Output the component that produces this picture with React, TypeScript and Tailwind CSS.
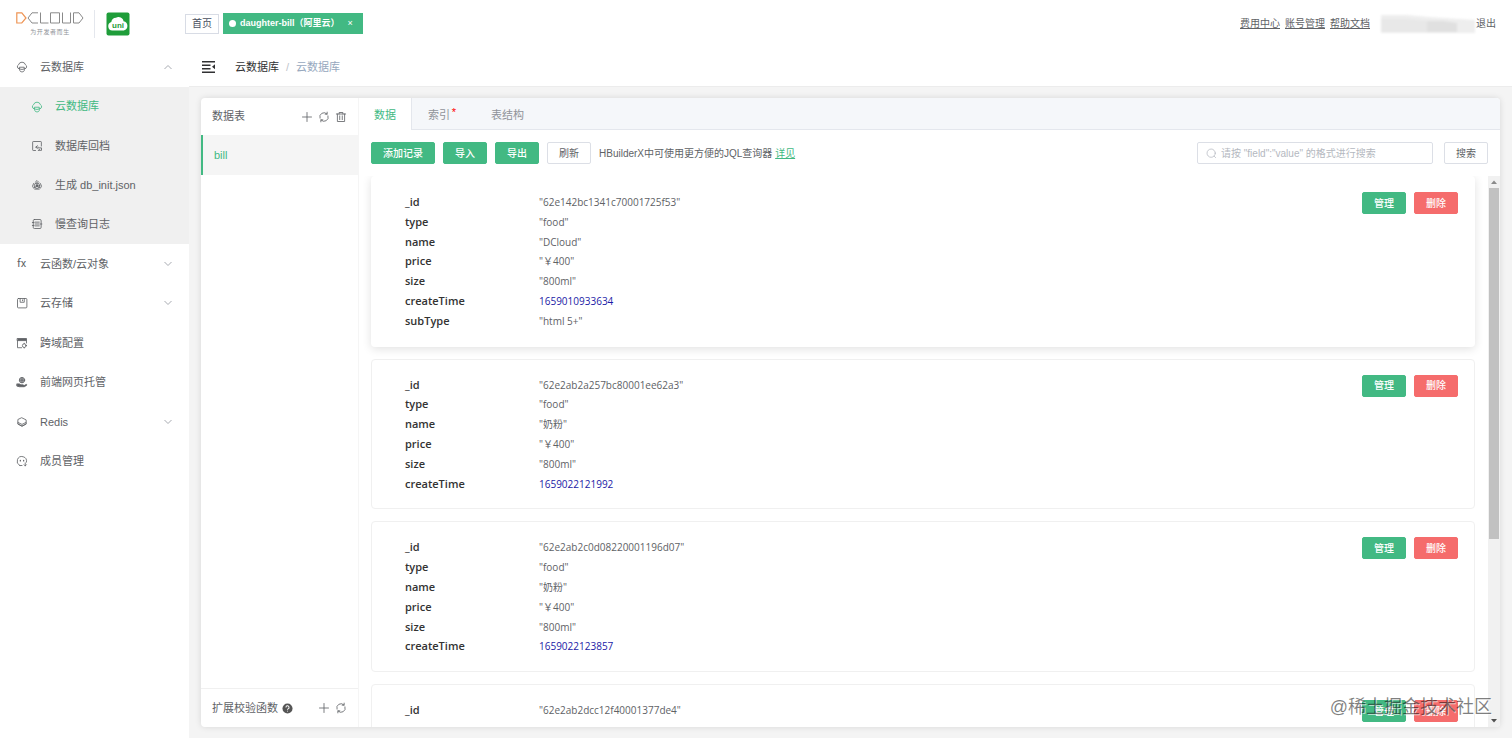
import { ReactNode } from 'react'

interface RecordItem {
  id: string
  fields: [string, string | number][]
}

interface MenuItem {
  label: string
  icon: ReactNode
  expandable?: boolean
}

const records: RecordItem[] = [
  {
    id: '62e142bc1341c70001725f53',
    fields: [
      ['type', 'food'],
      ['name', 'DCloud'],
      ['price', '￥400'],
      ['size', '800ml'],
      ['createTime', 1659010933634],
      ['subType', 'html 5+'],
    ],
  },
  {
    id: '62e2ab2a257bc80001ee62a3',
    fields: [
      ['type', 'food'],
      ['name', '奶粉'],
      ['price', '￥400'],
      ['size', '800ml'],
      ['createTime', 1659022121992],
    ],
  },
  {
    id: '62e2ab2c0d08220001196d07',
    fields: [
      ['type', 'food'],
      ['name', '奶粉'],
      ['price', '￥400'],
      ['size', '800ml'],
      ['createTime', 1659022123857],
    ],
  },
  {
    id: '62e2ab2dcc12f40001377de4',
    fields: [],
  },
]

function Icon({ children, className = 'size-3' }: { children: ReactNode; className?: string }) {
  return (
    <svg
      viewBox="0 0 16 16"
      fill="none"
      stroke="currentColor"
      strokeWidth="1.1"
      strokeLinecap="round"
      strokeLinejoin="round"
      className={`shrink-0 ${className}`}
      aria-hidden="true"
    >
      {children}
    </svg>
  )
}

const CloudDbIcon = () => (
  <Icon>
    <path d="M4 10.500a3 3 0 0 1-.6-5.500A4.800 4.800 0 0 1 12.600 5a3 3 0 0 1-.6 5.500" />
    <path d="M5 8.300h6v4.400c0 1-1.300 1.800-3 1.800s-3-.8-3-1.800zM5 10.400c1.500 1.200 4.500 1.200 6 0" />
  </Icon>
)

const RollbackIcon = () => (
  <Icon>
    <path d="M6 14H3a.8.8 0 0 1-.8-.8V2.800A.8.8 0 0 1 3 2h10a.8.8 0 0 1 .8.8V8" />
    <path d="M8.500 7.500 6.500 9.500l2 2M6.500 9.500h3M10 10.500h4v3.300h-4M11.500 12.300 10 13.800" />
  </Icon>
)

const GenerateIcon = () => (
  <Icon>
    <path d="M5.500 4.500 8 2l2.500 2.500M3.500 6 2 9.500l1.500 2.800M12.500 6 14 9.500l-1.500 2.800M5 13.500h6" />
    <circle cx="8" cy="9" r="3.600" />
    <circle cx="8" cy="9" r="1.300" fill="currentColor" />
    <path d="M8 4.500v3M4.500 11.500l2.500-1.600M11.500 11.500 9 9.900" />
  </Icon>
)

const SlowLogIcon = () => (
  <Icon>
    <rect x="3" y="2" width="10.500" height="12" rx="1.500" />
    <path d="M5.500 5.500H11M5.500 8H11M5.500 10.500H11M1.800 6H4M1.800 10H4M12.500 8h2" />
  </Icon>
)

const StorageIcon = () => (
  <Icon>
    <rect x="2" y="2" width="12.500" height="12.500" rx="1.200" />
    <path d="M5.500 2v5h5.500V2M8.700 3.800v1.200" />
  </Icon>
)

const CrossIcon = () => (
  <Icon>
    <path d="M2 2h12v2.800H2z" fill="currentColor" />
    <path d="M2 5v9.300h5.500M14 5v3" />
    <circle cx="11" cy="11.500" r="2.500" />
    <path d="M11 8.300V9M14 11.500h-.5M11 14.700V14" />
  </Icon>
)

const HostingIcon = () => (
  <Icon>
    <circle cx="8" cy="5.500" r="3.600" fill="currentColor" fillOpacity="0.5" />
    <path d="M5 5.500h6M8 2v7" />
    <path
      d="M1.500 10.500h3l2 1.300h3c1 0 1 1.200 0 1.200h1l3-1.800c1 0 1.200.8.5 1.300L11 14.300H4.500l-3-.8z"
      fill="currentColor"
    />
  </Icon>
)

const RedisIcon = () => (
  <Icon>
    <path d="m8 2.500 5.500 2.700v5.500L8 13.800l-5.500-3.100V5.200z" />
    <path d="M2.500 8.500 8 11.200l5.500-2.700M2.500 10.500 8 13.300l5.500-2.800" />
  </Icon>
)

const MemberIcon = () => (
  <Icon>
    <path d="M5 14A6.300 6.300 0 1 1 14 9.500" />
    <path d="M5 14h3M12.300 10.500v4M10.800 13l1.500 1.500 1.500-1.500" />
    <path d="M5.800 7v1M10.200 7v1" strokeWidth="1.600" />
  </Icon>
)

const PlusIcon = () => (
  <Icon>
    <path d="M8 2v12M2 8h12" />
  </Icon>
)

const RefreshIcon = () => (
  <Icon>
    <path d="M2.600 9.500A5.600 5.600 0 0 1 12 4M13.400 6.500A5.600 5.600 0 0 1 4 12" />
    <path d="M12.200 1.500V4.200H9.500M3.800 14.500v-2.700h2.700" />
  </Icon>
)

const TrashIcon = () => (
  <Icon>
    <path d="M1.800 4h12.400M5.500 4V2h5v2M3.200 4v10h9.600V4M6.300 6.500v5M9.700 6.500v5" />
  </Icon>
)

const subMenu: MenuItem[] = [
  { label: '云数据库', icon: <CloudDbIcon /> },
  { label: '数据库回档', icon: <RollbackIcon /> },
  { label: '生成 db_init.json', icon: <GenerateIcon /> },
  { label: '慢查询日志', icon: <SlowLogIcon /> },
]

const mainMenu: MenuItem[] = [
  {
    label: '云函数/云对象',
    icon: <span className="w-3 pl-px font-[Roboto,sans-serif] text-[11px]">fx</span>,
    expandable: true,
  },
  { label: '云存储', icon: <StorageIcon />, expandable: true },
  { label: '跨域配置', icon: <CrossIcon /> },
  { label: '前端网页托管', icon: <HostingIcon /> },
  { label: 'Redis', icon: <RedisIcon />, expandable: true },
  { label: '成员管理', icon: <MemberIcon /> },
]

function Chevron({ up = false }: { up?: boolean }) {
  return (
    <svg viewBox="0 0 10 10" fill="none" stroke="#a8abb2" className="ml-auto size-[10px]" aria-hidden="true">
      <path d={up ? 'M1.500 7 5 3.500 8.500 7' : 'M1.500 3 5 6.500 8.500 3'} />
    </svg>
  )
}

function DCloudLogo() {
  return (
    <svg viewBox="0 0 68 12" fill="none" stroke="#8a8a8a" className="h-3 w-[68px]" aria-hidden="true">
      <path d="M.8.8h5L10 6l-4.200 5H.800z" stroke="#ee9454" strokeWidth="1.200" />
      <path d="M22 .8h-6L12 6l4 5h6M24.500.500V11h8M34.500.800h9V11h-9zM46.500.500V11h8V.500M57.500.800H63L67 6l-4 5h-5.500z" />
    </svg>
  )
}

function UniLogo() {
  return (
    <svg viewBox="0 0 24 24" className="size-6" role="img" aria-label="uni">
      <rect x="0.500" y="0.500" width="23" height="23" rx="2" fill="#1f9d3a" />
      <path
        d="M6.200 18.500a4.300 4.300 0 0 1-.9-8.400 5 5 0 0 1 4.700-4.300 4.800 4.800 0 0 1 7.500 3.500 4.700 4.700 0 0 1 .3 9.200z"
        fill="#fff"
      />
      <text x="12" y="15.500" textAnchor="middle" fontSize="8" fontWeight="700" fill="#1f9d3a">
        uni
      </text>
    </svg>
  )
}

function Button({ children, variant = 'primary' }: { children: ReactNode; variant?: 'primary' | 'danger' | 'plain' }) {
  const styles = {
    primary: 'border-[#42b983] bg-[#42b983] font-medium text-white',
    danger: 'border-[#f56c6c] bg-[#f56c6c] font-medium text-white',
    plain: 'border-[#dcdfe6] bg-white text-[#606266]',
  }
  return (
    <button
      type="button"
      className={`flex h-[22px] shrink-0 items-center rounded-xs border px-[11px] text-[10px] ${styles[variant]}`}
    >
      {children}
    </button>
  )
}

function Header() {
  return (
    <header className="flex h-[47px] shrink-0 items-center bg-white px-4">
      <a href="#" aria-label="DCLOUD" className="flex flex-col items-center gap-1">
        <DCloudLogo />
        <span className="text-[6px] leading-[8px] tracking-widest text-[#909399]">为开发者而生</span>
      </a>
      <span className="ml-[10px] h-7 w-px bg-[#e4e7ed]" />
      <a href="#" className="ml-[11px]">
        <UniLogo />
      </a>
      <nav className="ml-[55px] flex items-center gap-1 text-[10px]">
        <a href="#" className="flex h-5 items-center border border-[#d8dce5] px-[6px] text-[#495060]">
          首页
        </a>
        <a href="#" className="flex h-[21px] items-center bg-[#42b983] px-[6px] text-[9px] font-semibold text-white">
          <span className="mr-1 size-[7px] rounded-full bg-white" />
          daughter-bill（阿里云）
          <span className="ml-1 px-1 font-normal">×</span>
        </a>
      </nav>
      <div className="ml-auto flex items-center text-[10px] text-[#606266]">
        <div className="flex gap-[5px] underline">
          <a href="#">费用中心</a>
          <a href="#">账号管理</a>
          <a href="#">帮助文档</a>
        </div>
        <svg viewBox="0 0 96 20" className="ml-[10px] h-5 w-24 blur-[1px]" aria-hidden="true">
          <path d="M1 1h26l22 2 46 3v13H49L40 19H1z" fill="#eeeeee" />
          <path d="M1 5h26l20 2v11H1z" fill="#e8e8e8" />
          <path d="M47 7h16l14 2v9H47z" fill="#e0e0e0" />
        </svg>
        <a href="#">退出</a>
      </div>
    </header>
  )
}

function Sidebar() {
  return (
    <nav className="w-[189px] shrink-0 bg-white text-[11px] text-[#606266]">
      <a href="#" className="flex h-10 items-center gap-3 px-4">
        <CloudDbIcon />
        云数据库
        <Chevron up />
      </a>
      <div className="grid h-[157px] bg-[#f0f0f0]">
        {subMenu.map((item, i) => (
          <a key={item.label} href="#" className={`flex items-center gap-3 pl-[31px] ${i === 0 ? 'text-[#42b983]' : ''}`}>
            {item.icon}
            {item.label}
          </a>
        ))}
      </div>
      <div className="grid h-[237px]">
        {mainMenu.map((item) => (
          <a key={item.label} href="#" className="flex items-center gap-3 px-4">
            {item.icon}
            {item.label}
            {item.expandable && <Chevron />}
          </a>
        ))}
      </div>
    </nav>
  )
}

function Breadcrumb() {
  return (
    <div className="flex h-10 shrink-0 items-center border-b border-[#ececec] bg-white pt-px pl-[13px] text-[11px]">
      <button type="button" aria-label="收起菜单" className="text-[#303133]">
        <svg viewBox="0 0 14 14" className="size-[14px]" fill="currentColor">
          <path d="M0 1h13v1.500H0zM0 4.500h8.500V6H0zM0 8h8.500v1.500H0zM0 11.500h13V13H0zM13 4.300v5L10 6.800z" />
        </svg>
      </button>
      <a href="#" className="ml-[19px] text-[#303133]">
        云数据库
      </a>
      <span className="mx-[7px] text-[#c0c4cc]">/</span>
      <span className="text-[#97a8be]">云数据库</span>
    </div>
  )
}

function TableList() {
  return (
    <aside className="flex w-[158px] shrink-0 flex-col border-r border-[#f5f5f5] text-[11px] text-[#606266]">
      <div className="flex h-[37px] shrink-0 items-center justify-between pr-[11px] pl-[11px]">
        <span>数据表</span>
        <div className="flex gap-[5px]">
          <button type="button" aria-label="新建">
            <PlusIcon />
          </button>
          <button type="button" aria-label="刷新列表">
            <RefreshIcon />
          </button>
          <button type="button" aria-label="删除表">
            <TrashIcon />
          </button>
        </div>
      </div>
      <a href="#" className="flex h-10 items-center border-l-2 border-[#42b983] bg-[#f5f5f5] pl-[11px] text-[#42b983]">
        bill
      </a>
      <div className="mt-auto flex h-[39px] items-center border-t border-[#f0f0f0] pr-[11px] pl-[11px]">
        扩展校验函数
        <svg viewBox="0 0 12 12" className="ml-1 size-[11px]" aria-hidden="true">
          <circle cx="6" cy="6" r="5.500" fill="#555" />
          <path d="M4.300 4.800a1.700 1.700 0 1 1 2.300 1.600c-.4.200-.6.400-.6.900M6 8.500v.9" fill="none" stroke="#fff" strokeWidth="1.100" />
        </svg>
        <div className="ml-auto flex gap-[5px]">
          <button type="button" aria-label="新建函数">
            <PlusIcon />
          </button>
          <button type="button" aria-label="刷新函数">
            <RefreshIcon />
          </button>
        </div>
      </div>
    </aside>
  )
}

function RecordCard({ record, active }: { record: RecordItem; active: boolean }) {
  const rows: [string, string | number][] = [['_id', record.id], ...record.fields]
  return (
    <article
      className={`flex shrink-0 items-start justify-between rounded-sm border bg-white py-[15px] pr-4 pl-[33px] ${
        active ? 'border-transparent shadow-[0_2px_10px_rgba(0,0,0,0.12)]' : 'border-[#f0f0f0]'
      }`}
    >
      <dl className="grid grid-cols-[134px_auto] items-baseline font-['Open_Sans','Noto_Sans_CJK_SC',sans-serif] leading-[1.8] text-[#606266]">
        {rows.map(([key, value]) => (
          <div key={key} className="contents">
            <dt className="text-[11px] font-semibold text-[#333]">{key}</dt>
            {typeof value === 'number' ? (
              <dd className="text-[10px] text-[#1a1aa6]">{value}</dd>
            ) : (
              <dd className="text-[10px]">"{value}"</dd>
            )}
          </div>
        ))}
      </dl>
      <div className="flex gap-2">
        <Button>管理</Button>
        <Button variant="danger">删除</Button>
      </div>
    </article>
  )
}

function ScrollTrack() {
  return (
    <div className="flex w-3 shrink-0 flex-col items-center bg-[#f1f1f1]" aria-hidden="true">
      <svg viewBox="0 0 12 12" className="size-3 shrink-0" fill="#8a8a8a">
        <path d="M3 8 6 4.500 9 8z" />
      </svg>
      <div className="min-h-0 w-[10px] flex-[2] bg-[#c1c1c1]" />
      <div className="min-h-0 flex-1" />
      <svg viewBox="0 0 12 12" className="size-3 shrink-0" fill="#505050">
        <path d="M3 4 6 7.500 9 4z" />
      </svg>
    </div>
  )
}

function DataPanel() {
  return (
    <section className="flex min-w-0 flex-1 flex-col">
      <div className="flex h-8 shrink-0 border-b border-[#e4e7ed] bg-[#f5f7fa] text-[11px] text-[#909399]" role="tablist">
        <button
          type="button"
          role="tab"
          aria-selected="true"
          className="-mb-px border-r border-[#e4e7ed] bg-white px-[15px] pt-[3px] text-[#42b983]"
        >
          数据
        </button>
        <button type="button" role="tab" aria-selected="false" className="relative px-4 pt-[3px]">
          索引
          <span className="absolute top-[6px] right-[10px] text-[#f00]">*</span>
        </button>
        <button type="button" role="tab" aria-selected="false" className="ml-[9px] px-4 pt-[3px]">
          表结构
        </button>
      </div>
      <div className="flex shrink-0 items-center gap-2 px-3 pt-3">
        <Button>添加记录</Button>
        <Button>导入</Button>
        <Button>导出</Button>
        <Button variant="plain">刷新</Button>
        <p className="text-[10px] text-[#606266]">
          HBuilderX中可使用更方便的JQL查询器{' '}
          <a href="#" className="text-[#42b983] underline">
            详见
          </a>
        </p>
        <label className="mr-[3px] ml-auto flex h-[22px] w-[236px] items-center gap-1 rounded-xs border border-[#dcdfe6] px-2 text-[#b4b8c0]">
          <Icon className="size-[11px]">
            <circle cx="7.500" cy="7.500" r="6" />
            <path d="m12 12 2 2" />
          </Icon>
          <input
            type="text"
            aria-label="搜索记录"
            placeholder={'请按 "field":"value" 的格式进行搜索'}
            className="min-w-0 flex-1 text-[10px] text-[#606266] outline-none placeholder:text-[#b4b8c0]"
          />
        </label>
        <Button variant="plain">搜索</Button>
      </div>
      <div className="mt-3 flex min-h-0 flex-1">
        <div className="flex min-w-0 flex-1 flex-col gap-3 overflow-hidden pr-[13px] pl-3">
          {records.map((record, i) => (
            <RecordCard key={record.id} record={record} active={i === 0} />
          ))}
        </div>
        <ScrollTrack />
      </div>
    </section>
  )
}

export default function App() {
  return (
    <div className="relative flex h-screen flex-col overflow-hidden bg-white font-['Liberation_Sans','Noto_Sans_CJK_SC',sans-serif]">
      <Header />
      <div className="flex min-h-0 flex-1">
        <Sidebar />
        <main className="flex min-w-0 flex-1 flex-col bg-[#f4f4f4]">
          <Breadcrumb />
          <div className="flex min-h-0 flex-1 p-3 pt-[11px] pb-[11px]">
            <div className="flex min-w-0 flex-1 overflow-hidden rounded-sm bg-white shadow-[0_0_6px_rgba(0,0,0,0.12)]">
              <TableList />
              <DataPanel />
            </div>
          </div>
        </main>
      </div>
      <div className="pointer-events-none absolute right-5 bottom-[15px] text-lg leading-8 text-black/50 [text-shadow:1px_1px_0_rgba(255,255,255,0.6)]">
        @稀土掘金技术社区
      </div>
    </div>
  )
}
